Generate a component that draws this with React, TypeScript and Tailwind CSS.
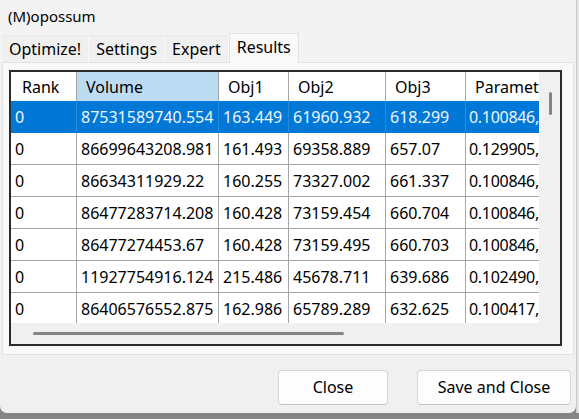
import React from "react";

const rows: string[][] = [
  ["0", "87531589740.554", "163.449", "61960.932", "618.299", "0.100846,0.2"],
  ["0", "86699643208.981", "161.493", "69358.889", "657.07", "0.129905,0.2"],
  ["0", "86634311929.22", "160.255", "73327.002", "661.337", "0.100846,0.2"],
  ["0", "86477283714.208", "160.428", "73159.454", "660.704", "0.100846,0.2"],
  ["0", "86477274453.67", "160.428", "73159.495", "660.703", "0.100846,0.2"],
  ["0", "11927754916.124", "215.486", "45678.711", "639.686", "0.102490,0.2"],
  ["0", "86406576552.875", "162.986", "65789.289", "632.625", "0.100417,0.2"],
];

const headers = ["Rank", "Volume", "Obj1", "Obj2", "Obj3", "Parameters"];
const widths = ["w-[66px]", "w-[142px]", "w-[70px]", "w-[97px]", "w-[80px]", "w-[160px]"];

export default function App() {
  return (
    <div
      className="w-[579px] h-[419px] overflow-hidden bg-[#858585] flex flex-col text-black"
      style={{ fontFamily: '"Noto Sans", "Liberation Sans", sans-serif' }}
    >
      <div className="flex h-[413px] shrink-0">
        <div className="w-[576px] h-[413px] bg-[#f0f0f0] rounded-b-[7px] flex flex-col overflow-hidden">
          {/* title bar */}
          <div className="h-[33px] shrink-0 bg-[#f3f3f3] flex items-center pl-[8px] text-[15px] pb-[1px]">
            (M)opossum
          </div>
          {/* tabs */}
          <div className="h-[29px] shrink-0 flex items-end pl-[2px] bg-[#f3f3f3]">
            {["Optimize!", "Settings", "Expert"].map((t) => (
              <div
                key={t}
                className="h-[27px] px-[7px] bg-[#f0f0f0] border-r border-[#fafafa] border-t border-t-[#e9e9e9] flex items-center text-[16px] leading-none pb-[1px]"
              >
                {t}
              </div>
            ))}
            <div className="relative z-10 -mb-px h-[30px] px-[7px] bg-[#f9f9f9] border-x border-t border-[#e2e2e2] flex items-center text-[16px] leading-none pb-[4px]">
              Results
            </div>
          </div>
          {/* pane */}
          <div className="ml-[2px] w-[572px] h-[293px] shrink-0 bg-[#f9f9f9] border border-[#e2e2e2] pl-[6px] pt-[7px]">
            <div className="w-[553px] h-[276px] border-2 border-[#2b2b2b] bg-white flex">
              <div className="w-[528px] flex flex-col">
                <div className="h-[251px] overflow-hidden">
                  {/* header */}
                  <div className="flex h-[29px] w-[800px]">
                    {headers.map((h, i) => (
                      <div
                        key={h}
                        className={`${widths[i]} shrink-0 h-full flex items-center text-[16px] leading-none pt-[1px] border-r border-[#a6a6a6] ${
                          i === 1 ? "bg-[#bcdcf4]" : "bg-white"
                        } ${i === 0 ? "pl-[11px]" : "pl-[9px]"}`}
                      >
                        {h}
                      </div>
                    ))}
                  </div>
                  {rows.map((r, ri) => {
                    const sel = ri === 0;
                    return (
                      <div
                        key={ri}
                        className={`flex h-[32px] w-[800px] border-b ${
                          sel ? "bg-[#0078d7] text-[#eef5fc] border-[#0078d7]" : "bg-white border-[#a6a6a6]"
                        }`}
                      >
                        {r.map((c, ci) => (
                          <div
                            key={ci}
                            className={`${widths[ci]} shrink-0 h-full flex items-center text-[16px] leading-none whitespace-nowrap overflow-hidden border-r ${
                              sel ? "border-[#2a8ada]" : "border-[#a6a6a6]"
                            } ${ci === 5 ? "pl-[3px] tracking-[-0.3px]" : "pl-[4px]"}`}
                          >
                            {c}
                          </div>
                        ))}
                      </div>
                    );
                  })}
                </div>
                {/* horizontal scrollbar */}
                <div className="flex-1 bg-[#f0f0f0] flex items-center pl-[22px]">
                  <div className="w-[311px] h-[3px] rounded-full bg-[#858585]" />
                </div>
              </div>
              {/* vertical scrollbar */}
              <div className="flex-1 bg-[#f0f0f0] pt-[20px] pl-[10px]">
                <div className="w-[3px] h-[23px] rounded-full bg-[#858585]" />
              </div>
            </div>
          </div>
          {/* footer */}
          <div className="flex-1 flex items-start justify-end pt-[15px] pr-[5px] gap-[29px]">
            <button className="w-[110px] h-[35px] rounded-[4px] bg-[#fdfdfd] border border-[#d6d6d6] border-b-[#c4c4c4] text-[16px] leading-none pb-[1px]">
              Close
            </button>
            <button className="w-[154px] h-[35px] rounded-[4px] bg-[#fdfdfd] border border-[#d6d6d6] border-b-[#c4c4c4] text-[16px] leading-none pb-[1px]">
              Save and Close
            </button>
          </div>
        </div>
        <div className="flex-1 h-full bg-[#e4e4e4] border-l border-[#c9c9c9]" />
      </div>
      <div className="flex-1" />
    </div>
  );
}
